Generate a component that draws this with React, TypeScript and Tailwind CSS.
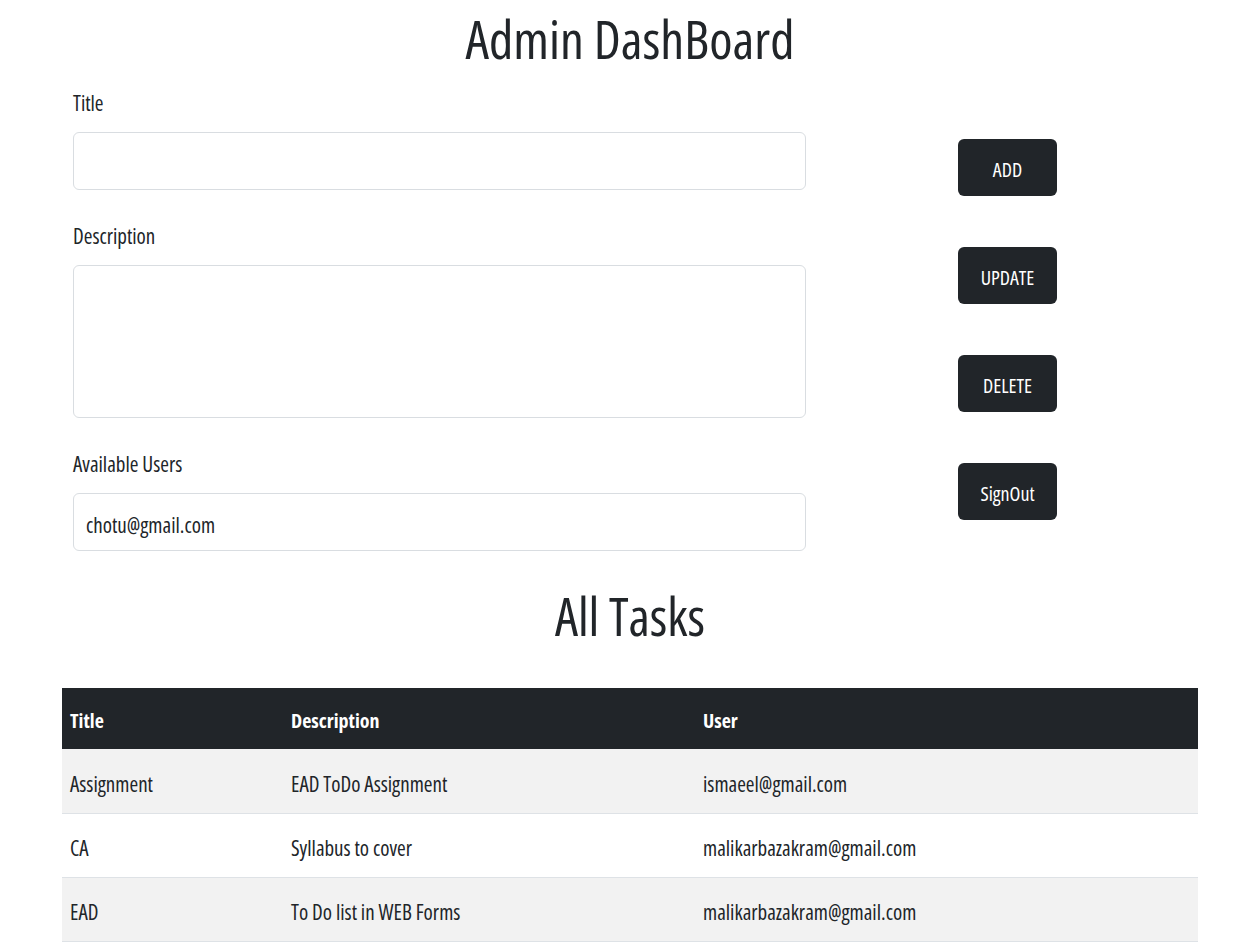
const tasks = [
  { title: "Assignment", description: "EAD ToDo Assignment", user: "ismaeel@gmail.com" },
  { title: "CA", description: "Syllabus to cover", user: "malikarbazakram@gmail.com" },
  { title: "EAD", description: "To Do list in WEB Forms", user: "malikarbazakram@gmail.com" },
];

function Field({ label, children }: { label: string; children: React.ReactNode }) {
  return (
    <div className="flex flex-col gap-[10px]">
      <label className="flex h-[36px] items-center text-[21px]">{label}</label>
      {children}
    </div>
  );
}

function ActionButton({ label }: { label: string }) {
  return (
    <button className="flex h-[57px] w-[99px] items-center justify-center rounded-[6px] bg-[#212529] pt-[4px] text-[20px] text-white">
      {label}
    </button>
  );
}

export default function App() {
  return (
    <div className="min-h-[948px] bg-white pr-[47px] pl-[62px] font-['Open_Sans',sans-serif] font-stretch-condensed text-[#212529]">
      <h1 className="flex h-[86px] items-start justify-center pt-[1px] text-[53px] leading-[76px] font-normal">
        Admin DashBoard
      </h1>

      <div className="flex pl-[11px]">
        <div className="flex w-[733px] flex-col gap-[29px]">
          <Field label="Title">
            <input className="h-[58px] w-full rounded-[6px] border border-[#d9dde1] px-[12px] text-[21px]" />
          </Field>
          <Field label="Description">
            <textarea className="h-[153px] w-full resize-none rounded-[6px] border border-[#d9dde1] px-[12px] text-[21px]" />
          </Field>
          <Field label="Available Users">
            <div className="flex h-[58px] w-full items-center rounded-[6px] border border-[#d9dde1] px-[12px] pt-[8px] text-[21px]">
              chotu@gmail.com
            </div>
          </Field>
        </div>

        <div className="ml-[152px] flex flex-col gap-[51px] pt-[53px]">
          <ActionButton label="ADD" />
          <ActionButton label="UPDATE" />
          <ActionButton label="DELETE" />
          <ActionButton label="SignOut" />
        </div>
      </div>

      <h2 className="mt-[27px] mb-[36px] flex h-[74px] items-center justify-center pt-[2px] text-[52px] font-normal">
        All Tasks
      </h2>

      <table className="w-[1136px] border-collapse text-left text-[21px]">
        <thead>
          <tr className="h-[61px] bg-[#212529] text-[20px] text-white">
            <th className="w-[221px] px-[8px] pt-[4px] font-bold">Title</th>
            <th className="w-[412px] px-[8px] pt-[4px] font-bold">Description</th>
            <th className="px-[8px] pt-[4px] font-bold">User</th>
          </tr>
        </thead>
        <tbody>
          {tasks.map((t, i) => (
            <tr
              key={t.title}
              className={`h-[64px] border-b border-[#dee2e6] ${i % 2 === 0 ? "bg-[#f2f2f2]" : "bg-white"}`}
            >
              <td className="px-[8px] pt-[8px]">{t.title}</td>
              <td className="px-[8px] pt-[8px]">{t.description}</td>
              <td className="px-[8px] pt-[8px]">{t.user}</td>
            </tr>
          ))}
        </tbody>
      </table>
    </div>
  );
}
